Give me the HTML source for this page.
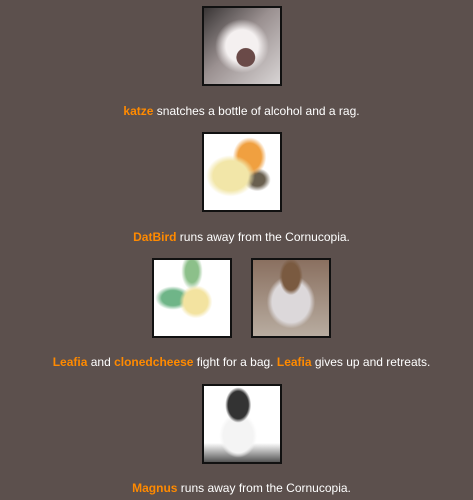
<!DOCTYPE html>
<html><head><style>
body{margin:0;background:#5c504d;width:473px;height:500px;overflow:hidden;font-family:"Liberation Sans",Arial,sans-serif;font-size:12px;color:#fff;}
.img{position:absolute;width:76px;height:76px;border:2px solid #111;box-sizing:content-box;}
.t{position:absolute;left:5px;width:473px;text-align:center;line-height:16px;}
b{color:#ff8a00;}
</style></head><body>
<div class="img" style="left:202px;top:6px;background:radial-gradient(circle at 55% 65%,#6a4a48 0 14%,transparent 15%),radial-gradient(circle at 50% 50%,#f4f0f0 0 30%,transparent 50%),linear-gradient(135deg,#3a3636,#9a9090 45%,#d8d4d4)"></div>
<div class="t" style="top:103px"><b>katze</b> snatches a bottle of alcohol and a rag.</div>
<div class="img" style="left:202px;top:132px;background:radial-gradient(ellipse at 35% 55%,#f2e6a8 0 25%,transparent 35%),radial-gradient(ellipse at 60% 30%,#f0a040 0 18%,transparent 26%),radial-gradient(ellipse at 70% 60%,#6a6050 0 10%,transparent 18%),#fff"></div>
<div class="t" style="top:229px"><b>DatBird</b> runs away from the Cornucopia.</div>
<div class="img" style="left:152px;top:258px;background:radial-gradient(ellipse at 55% 55%,#f3e3a0 0 20%,transparent 28%),radial-gradient(ellipse at 25% 50%,#6fb588 0 14%,transparent 22%),radial-gradient(ellipse at 50% 15%,#8cc08a 0 12%,transparent 20%),#fff"></div>
<div class="img" style="left:251px;top:258px;background:radial-gradient(ellipse at 50% 22%,#7a5a40 0 16%,transparent 22%),radial-gradient(ellipse at 50% 55%,#dcd8da 0 35%,transparent 45%),linear-gradient(#8a7060,#b8aca0)"></div>
<div class="t" style="top:354px"><b>Leafia</b> and <b>clonedcheese</b> fight for a bag. <b>Leafia</b> gives up and retreats.</div>
<div class="img" style="left:202px;top:384px;background:radial-gradient(ellipse at 45% 25%,#333 0 17%,transparent 22%),radial-gradient(ellipse at 45% 65%,#f4f4f4 0 25%,transparent 32%),linear-gradient(#fff 75%,#555)"></div>
<div class="t" style="top:480px"><b>Magnus</b> runs away from the Cornucopia.</div>
</body></html>
